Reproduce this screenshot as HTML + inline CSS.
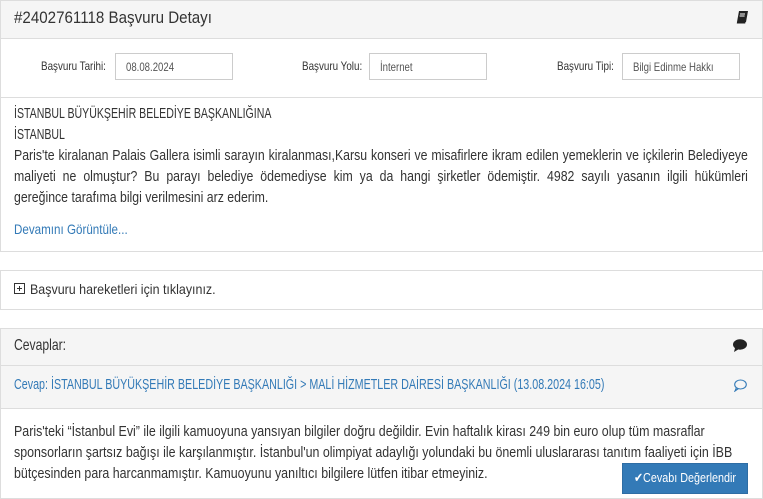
<!DOCTYPE html>
<html><head><meta charset="utf-8"><style>
*{box-sizing:border-box;margin:0;padding:0}
body{width:763px;height:499px;overflow:hidden;background:#fff;font-family:"Liberation Sans",sans-serif;font-size:14px;color:#333;position:relative}
.a{position:absolute;white-space:nowrap;transform-origin:0 0}
.panel{position:absolute;left:0;width:763px;border:1px solid #ddd;background:#fff}
.hd{background:#f5f5f5;border-bottom:1px solid #ddd}
.lbl{font-size:12px;color:#333;transform:scaleX(.82)}
.inp{position:absolute;border:1px solid #ccc;height:27px;background:#fff}
.inp span{position:absolute;left:10px;top:6px;font-size:12px;color:#555;white-space:nowrap;transform:scaleX(.8);transform-origin:0 0}
.j{text-align:justify;text-align-last:justify;width:895px;font-size:15px;transform:scaleX(.82)}
.c{transform:scaleX(.76)}
.p{font-size:15px;transform:scaleX(.82)}
.lk{color:#337ab7}
</style></head><body>
<div class="panel" style="top:0;height:252px">
  <div class="hd" style="height:38px"></div>
</div>
<div class="a" style="left:14px;top:8px;font-size:17px;color:#333;transform:scaleX(.89)">#2402761118 Başvuru Detayı</div>
<svg class="a" style="left:736px;top:11px" width="12" height="13" viewBox="0 0 12 13"><path d="M3 0h9l-2 11H1z" fill="#222"/><path d="M1 11h8.5l-.3 1.5H.8z" fill="#222"/><path d="M4 3h5M3.6 5h5" stroke="#fff" stroke-width="1"/></svg>
<div class="a" style="left:0;top:97px;width:763px;border-top:1px solid #ddd"></div>
<div class="a lbl" style="left:41px;top:59px">Başvuru Tarihi:</div>
<div class="inp" style="left:115px;top:53px;width:118px"><span>08.08.2024</span></div>
<div class="a lbl" style="left:302px;top:59px">Başvuru Yolu:</div>
<div class="inp" style="left:369px;top:53px;width:118px"><span>İnternet</span></div>
<div class="a lbl" style="left:557px;top:59px">Başvuru Tipi:</div>
<div class="inp" style="left:622px;top:53px;width:118px"><span>Bilgi Edinme Hakkı</span></div>
<div class="a c" style="left:14px;top:103px;line-height:21px;font-size:15px;transform:scaleX(.705)">İSTANBUL BÜYÜKŞEHİR BELEDİYE BAŞKANLIĞINA<br>İSTANBUL</div>
<div class="a j" style="left:14px;top:145px;line-height:21px">Paris'te kiralanan Palais Gallera isimli sarayın kiralanması,Karsu konseri ve misafirlere ikram edilen yemeklerin ve içkilerin Belediyeye</div>
<div class="a j" style="left:14px;top:166px;line-height:21px">maliyeti ne olmuştur? Bu parayı belediye ödemediyse kim ya da hangi şirketler ödemiştir. 4982 sayılı yasanın ilgili hükümleri</div>
<div class="a p" style="left:14px;top:187px;line-height:21px">gereğince tarafıma bilgi verilmesini arz ederim.</div>
<div class="a lk" style="left:14px;top:221px;transform:scaleX(.83)">Devamını Görüntüle...</div>

<div class="panel" style="top:270px;height:40px"></div>
<div class="a" style="left:14px;top:283px;width:11px;height:11px;border:1px solid #333"><div style="position:absolute;left:2px;top:4px;width:5px;height:1px;background:#333"></div><div style="position:absolute;left:4px;top:2px;width:1px;height:5px;background:#333"></div></div>
<div class="a" style="left:30px;top:281px;transform:scaleX(.89)">Başvuru hareketleri için tıklayınız.</div>

<div class="panel" style="top:328px;height:171px">
  <div class="hd" style="height:37px"></div>
  <div class="hd" style="height:43px"></div>
</div>
<div class="a" style="left:14px;top:337px;font-size:16px;transform:scaleX(.76)">Cevaplar:</div>
<svg class="a" style="left:733px;top:339px" width="14" height="13" viewBox="0 0 14 13"><ellipse cx="7" cy="5.5" rx="7" ry="5.2" fill="#222"/><path d="M2 9l-1 4 5-3z" fill="#222"/></svg>
<div class="a lk" style="left:14px;top:376px;font-size:15px;transform:scaleX(.715)">Cevap: İSTANBUL BÜYÜKŞEHİR BELEDİYE BAŞKANLIĞI &gt; MALİ HİZMETLER DAİRESİ BAŞKANLIĞI (13.08.2024 16:05)</div>
<svg class="a" style="left:733px;top:379px" width="14" height="13" viewBox="0 0 14 13"><ellipse cx="7.5" cy="5.5" rx="5.8" ry="4.5" fill="none" stroke="#337ab7" stroke-width="1.1"/><path d="M3.5 8.5l-1.5 3.5 3.5-2.5" fill="none" stroke="#337ab7" stroke-width="1.1"/></svg>
<div class="a" style="left:14px;top:421px;line-height:21px;font-size:15px;transform:scaleX(.828)">Paris'teki “İstanbul Evi” ile ilgili kamuoyuna yansıyan bilgiler doğru değildir. Evin haftalık kirası 249 bin euro olup tüm masraflar<br>sponsorların şartsız bağışı ile karşılanmıştır. İstanbul'un olimpiyat adaylığı yolundaki bu önemli uluslararası tanıtım faaliyeti için İBB<br>bütçesinden para harcanmamıştır. Kamuoyunu yanıltıcı bilgilere lütfen itibar etmeyiniz.</div>
<div class="a" style="left:622px;top:463px;width:126px;height:31px;background:#337ab7;border:1px solid #2e6da4"></div>
<div class="a" style="left:634px;top:470px;color:#fff;font-size:13px;transform:scaleX(.83)">✔Cevabı Değerlendir</div>
</body></html>
